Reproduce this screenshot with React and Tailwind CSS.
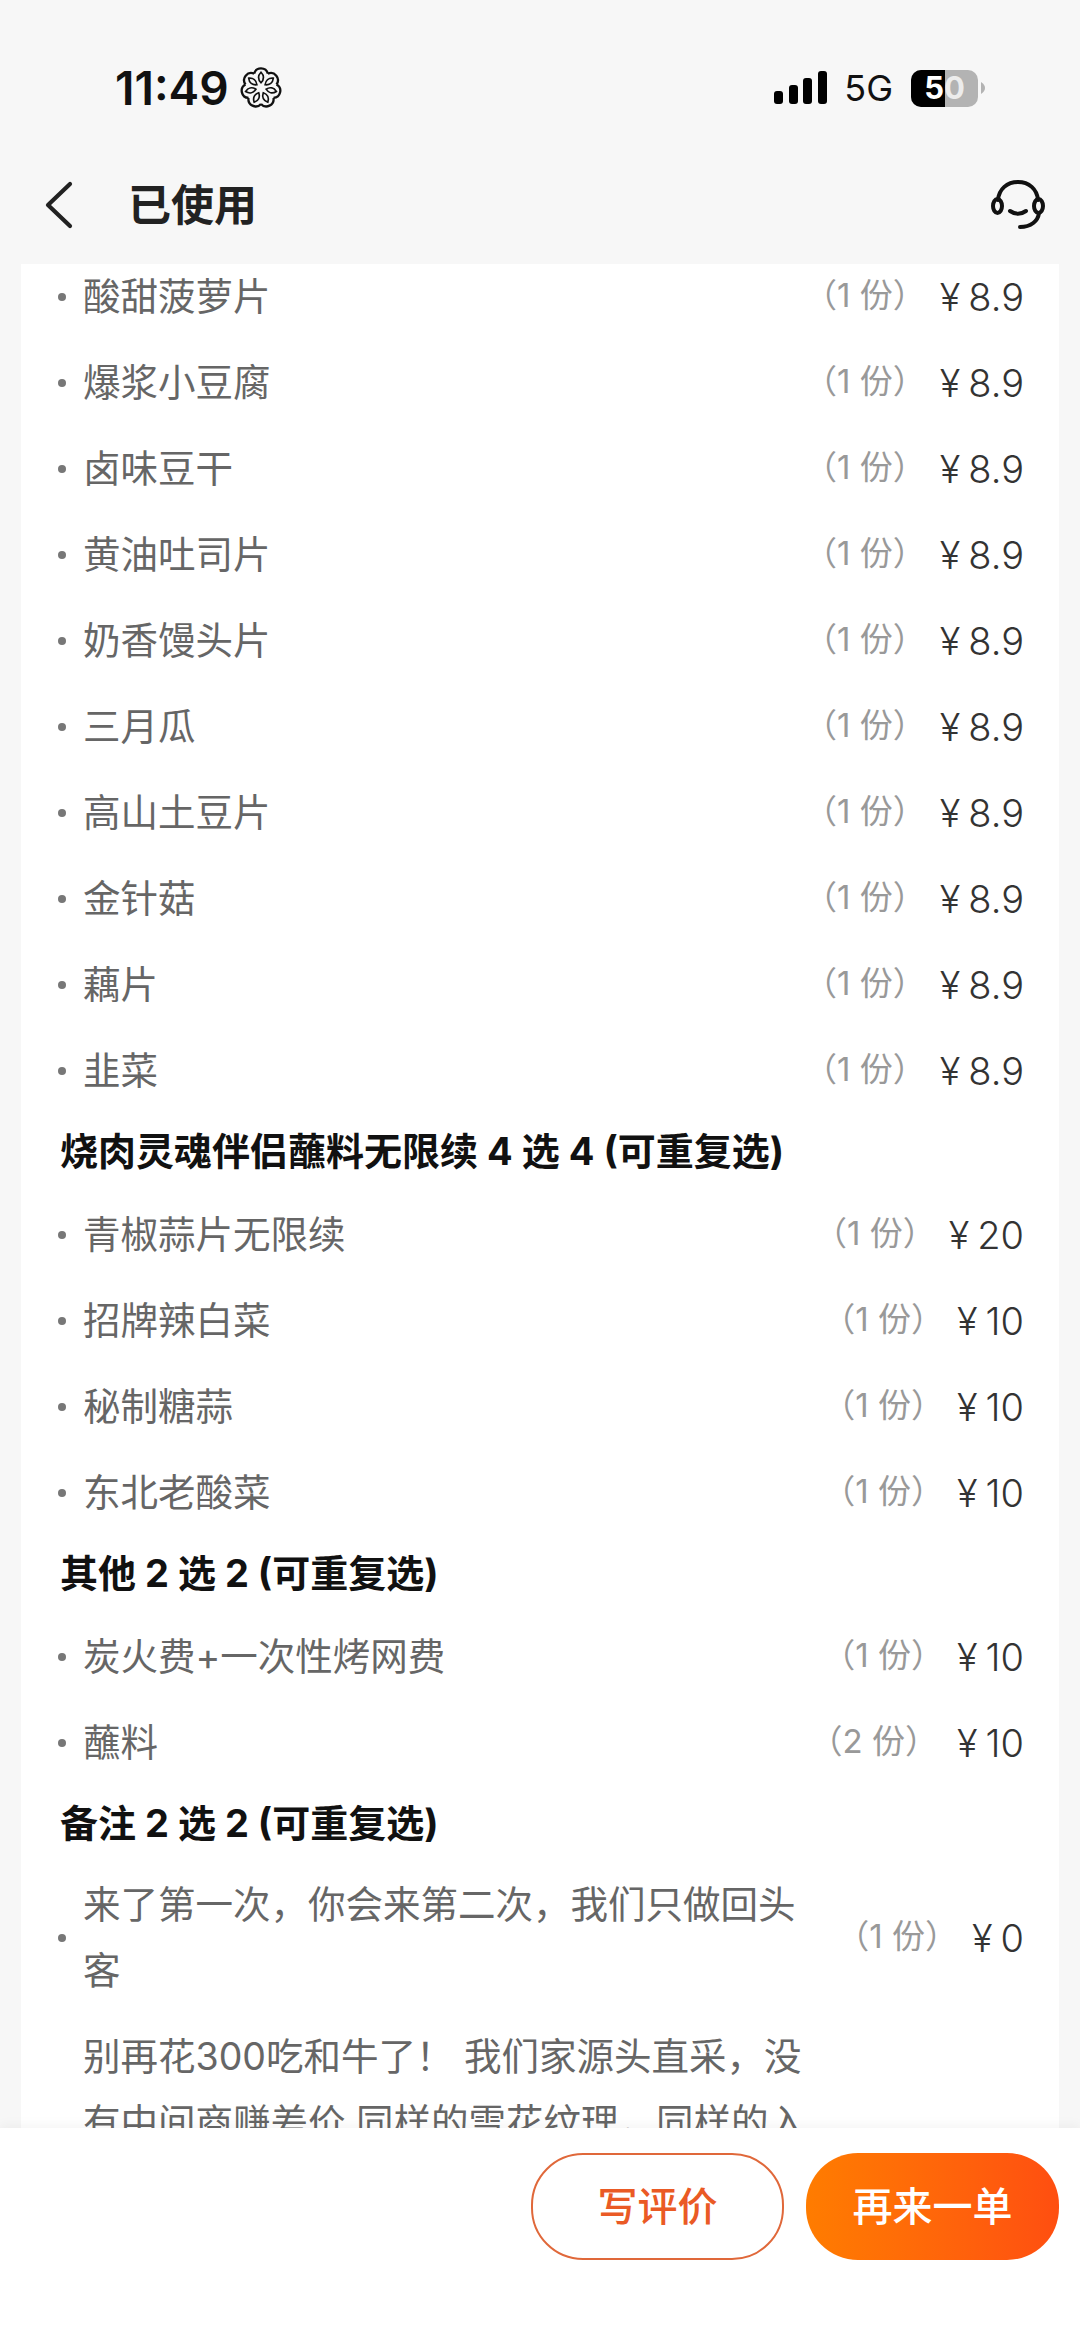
import React from 'react';

const FONT = "font-['Inter','Noto_Sans_CJK_SC',sans-serif]";

const rows1 = ['酸甜菠萝片', '爆浆小豆腐', '卤味豆干', '黄油吐司片', '奶香馒头片', '三月瓜', '高山土豆片', '金针菇', '藕片', '韭菜'];

const FlowerIcon = () => (
    <svg width="42" height="42" viewBox="0 0 44 44" fill="none" stroke="#111" strokeWidth="2.4">
        {[0, 51.4, 102.8, 154.3, 205.7, 257.1, 308.6].map((a) => (
            <g key={a} transform={`rotate(${a} 22 22)`}>
                <path d="M14.77 6.98A7.5 7.5 0 0 1 29.23 6.98" />
                <path d="M22 5.5c3.4 3.4 3.4 7.6 0 11c-3.4-3.4-3.4-7.6 0-11z" strokeWidth="1.8" />
            </g>
        ))}
    </svg>
);

const SignalIcon = () => (
    <svg width="54" height="34" viewBox="0 0 54 34" fill="#000">
        <rect x="0" y="20" width="9" height="13" rx="3" />
        <rect x="15" y="14" width="9" height="19" rx="3" />
        <rect x="29" y="7" width="9" height="26" rx="3" />
        <rect x="44" y="0" width="9" height="33" rx="3" />
    </svg>
);

const Battery = () => (
    <div className="flex items-center">
        <div className="relative w-[67px] h-[37px] rounded-[10px] overflow-hidden bg-[#b3b3b3] flex">
            <div className="w-[34px] h-full bg-black" />
            <div className="absolute inset-0 flex items-center justify-center text-[31px] font-bold text-white">
                5<span className="text-[#ececec]">0</span>
            </div>
        </div>
        <svg width="5" height="12" viewBox="0 0 5 12" className="ml-[3px]">
            <path d="M0 0c3 2 4 4 4 6s-1 4-4 6z" fill="#b3b3b3" />
        </svg>
    </div>
);

const BackIcon = () => (
    <svg width="30" height="48" viewBox="0 0 30 48" fill="none" stroke="#222" strokeWidth="4.2" strokeLinecap="round" strokeLinejoin="round">
        <path d="M26 3L4 24l22 21" />
    </svg>
);

const HeadsetIcon = () => (
    <svg width="56" height="50" viewBox="0 0 56 50" fill="none" stroke="#111" strokeWidth="4" strokeLinecap="round">
        <path d="M8 20C9 9 17 2 28 2s19 7 20 18" />
        <ellipse cx="7.5" cy="26" rx="4.5" ry="7" />
        <ellipse cx="48.5" cy="26" rx="4.5" ry="7" />
        <path d="M20 31c5 3.5 11 3.5 16 0" />
        <path d="M49 33c-1 8-8 14-19 14" />
    </svg>
);

const Price = ({ value }) => (
    <div className="text-[38px] text-[#333] font-light flex items-baseline">
        <span className="mr-[8px]">¥</span>{value}
    </div>
);

const Row = ({ name, qty = '（1 份）', price = '8.9', gap = 'mr-[14px]' }) => (
    <div className="flex items-center h-[86px] pl-[37px] pr-[35px]">
        <div className="w-[8px] h-[8px] rounded-full bg-[#777] shrink-0 mr-[17px]" />
        <div className="flex-1 text-[37.5px] text-[#666] leading-[66px] whitespace-nowrap -mt-[1px]">{name}</div>
        <div className={`text-[33px] text-[#999] -mt-[3px] ${gap}`}>{qty}</div>
        <Price value={price} />
    </div>
);

const Section = ({ children }) => (
    <div className="h-[78px] pl-[39px] pt-[4px] text-[38px] font-bold text-[#111] leading-[66px]">{children}</div>
);

export default function App() {
    return (
        <div className={`w-[1080px] h-[2348px] flex flex-col overflow-hidden bg-[#f7f7f7] ${FONT}`}>
            {/* status bar */}
            <div className="h-[152px] pt-[56px] pl-[115px] pr-[94px] flex items-start justify-between shrink-0">
                <div className="flex items-center gap-[11px]">
                    <span className="text-[46px] font-semibold text-[#111] leading-[64px]">11:49</span>
                    <FlowerIcon />
                </div>
                <div className="flex items-center pt-[12px]">
                    <SignalIcon />
                    <span className="text-[36px] text-[#111] ml-[16px] mr-[18px] leading-[40px]">5G</span>
                    <Battery />
                </div>
            </div>

            {/* title */}
            <div className="h-[112px] pb-[6px] pl-[44px] pr-[34px] flex items-center justify-between shrink-0">
                <div className="flex items-center">
                    <BackIcon />
                    <span className="ml-[54px] text-[43px] font-semibold text-[#222]">已使用</span>
                </div>
                <HeadsetIcon />
            </div>

            {/* order list */}
            <div className="flex-1 mx-[21px] bg-white overflow-hidden min-h-0">
                <div className="-mt-[10px]">
                    {rows1.map((r) => <Row key={r} name={r} />)}
                    <Section>烧肉灵魂伴侣蘸料无限续 4 选 4 (可重复选)</Section>
                    <Row name="青椒蒜片无限续" price="20" gap="mr-[13px]" />
                    <Row name="招牌辣白菜" price="10" gap="mr-[13px]" />
                    <Row name="秘制糖蒜" price="10" gap="mr-[13px]" />
                    <Row name="东北老酸菜" price="10" gap="mr-[13px]" />
                    <Section>其他 2 选 2 (可重复选)</Section>
                    <Row name="炭火费+一次性烤网费" price="10" gap="mr-[13px]" />
                    <Row name="蘸料" qty="（2 份）" price="10" gap="mr-[19px]" />
                    <Section>备注 2 选 2 (可重复选)</Section>
                    <div className="flex items-center pl-[37px] pr-[35px] pt-[8px] pb-[6px]">
                        <div className="w-[8px] h-[8px] rounded-full bg-[#777] shrink-0 mr-[17px]" />
                        <div className="flex-1 text-[37.5px] text-[#666] leading-[66px]">
                            <div>来了第一次，你会来第二次，我们只做回头</div>
                            <div>客</div>
                        </div>
                        <div className="text-[33px] text-[#999] -mt-[3px] mr-[14px]">（1 份）</div>
                        <Price value="0" />
                    </div>
                    <div className="pl-[62px] pt-[14px] text-[37.5px] text-[#666] leading-[66px] whitespace-nowrap">
                        <div>别再花300吃和牛了！ 我们家源头直采，没</div>
                        <div>有中间商赚差价 同样的雪花纹理，同样的入</div>
                    </div>
                </div>
            </div>

            {/* bottom actions */}
            <div className="h-[220px] shrink-0 bg-white shadow-[0_-4px_10px_rgba(0,0,0,0.04)] flex justify-end gap-[22px] pt-[25px] pr-[21px] relative">
                <button className="w-[253px] h-[107px] rounded-[52px] border-2 border-[#e0683a] bg-white text-[40px] font-medium text-[#ea5a25]">写评价</button>
                <button className="w-[253px] h-[107px] rounded-[52px] bg-gradient-to-r from-[#ff7c00] to-[#ff4e10] text-[40px] font-medium text-white">再来一单</button>
            </div>
        </div>
    );
}
